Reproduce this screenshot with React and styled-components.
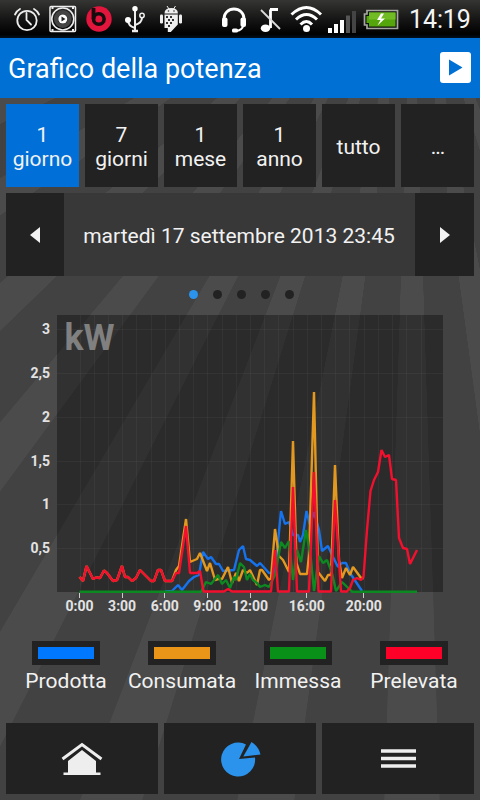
import React from "react";
import styled, { createGlobalStyle } from "styled-components";

const GlobalStyle = createGlobalStyle`
  * { box-sizing: border-box; }
  body { margin: 0; background: #424242; }
`;

const Screen = styled.div`
  width: 480px;
  height: 800px;
  overflow: hidden;
  display: flex;
  flex-direction: column;
  font-family: Roboto, "Liberation Sans", sans-serif;
  color: #f2f2f2;
  background: repeating-conic-gradient(
    from 82.7deg at 412px -68px,
    #4b4b4b 0deg 3.6deg,
    #424242 3.65deg 9.5deg,
    #4b4b4b 9.55deg
  );
`;

const StatusBar = styled.div`
  height: 38px;
  flex: none;
  background: linear-gradient(#353533, #161616 50%, #000 90%, #02101f);
  display: flex;
`;

const StatusIcons = styled.svg`
  display: block;
  width: 405px;
  height: 38px;
`;

const Clock = styled.span`
  font-size: 25px;
  line-height: 39px;
  letter-spacing: -0.1px;
  margin-left: 4px;
  color: #f4f4f4;
  white-space: nowrap;
`;

const Header = styled.header`
  height: 60px;
  flex: none;
  padding: 0 9px 0 8px;
  background: #0070d4;
  display: flex;
  align-items: center;
  justify-content: space-between;
`;

const Title = styled.h1`
  margin: 2px 0 0;
  font-size: 27px;
  font-weight: 400;
  letter-spacing: 0;
  color: #fff;
  white-space: nowrap;
`;

const PlayButton = styled.button`
  width: 31px;
  height: 31px;
  margin-bottom: 1px;
  padding: 0;
  border: 0;
  border-radius: 3px;
  background: #fff;
  svg { display: block; }
`;

const Tabs = styled.nav`
  display: grid;
  grid-template-columns: repeat(6, 1fr);
  gap: 6px;
  margin: 6px 6px 0;
  height: 83px;
  flex: none;
`;

const Tab = styled.button`
  border: 0;
  padding: 3px 0 0;
  min-width: 0;
  background: ${(p) => (p.$active ? "#0070d8" : "#222")};
  color: #f2f2f2;
  font: 400 21px/24px Roboto, sans-serif;
  letter-spacing: ${(p) => (p.$tight ? "-1px" : "0")};
  white-space: pre-line;
`;

const DateRow = styled.div`
  display: flex;
  margin: 6px 6px 0;
  height: 83px;
  flex: none;
`;

const Arrow = styled.button`
  width: ${(p) => p.$width}px;
  border: 0;
  padding: 0;
  background: #222;
  display: flex;
  align-items: center;
  justify-content: center;
`;

const DateLabel = styled.div`
  flex: 1;
  background: #383838;
  display: flex;
  align-items: center;
  justify-content: center;
  padding: 3px 1px 0 0;
  font-size: 21px;
  white-space: nowrap;
`;

const Dots = styled.div`
  display: flex;
  gap: 15px;
  margin: 14px 0 0 189px;
  height: 9px;
  flex: none;
`;

const Dot = styled.i`
  width: 9px;
  height: 9px;
  border-radius: 50%;
  background: ${(p) => (p.$active ? "#2b93ec" : "#222")};
`;

const ChartSvg = styled.svg`
  display: block;
  flex: none;
  width: 480px;
  height: 317px;
  margin-top: 1px;
  text {
    font-family: Roboto, sans-serif;
    font-weight: 700;
  }
`;

const Legend = styled.div`
  display: grid;
  grid-template-columns: repeat(4, 116px);
  margin: 24px 0 0 8px;
  height: 82px;
  flex: none;
`;

const LegendItem = styled.div`
  display: flex;
  flex-direction: column;
  align-items: center;
  font-size: 21px;
  line-height: 25px;
  letter-spacing: 0.05px;
  white-space: nowrap;
`;

const Swatch = styled.span`
  width: 68px;
  height: 24px;
  margin-bottom: 4px;
  border: 6px solid #222;
  background: ${(p) => p.$color};
`;

const BottomBar = styled.nav`
  display: grid;
  grid-template-columns: repeat(3, 1fr);
  gap: 6px;
  margin: 0 6px;
  height: 71px;
  flex: none;
`;

const NavButton = styled.button`
  border: 0;
  padding: 0;
  background: #222;
  display: flex;
  align-items: center;
  justify-content: center;
`;

const series = [
  {
    color: "#1673ee",
    points:
      "165,591.5 172,591 178,585 182,590 189,581 194,577 199,575 203,552 208,559 211,557 216,564 219,564 223,571 234,570 239,550 243,546 246,559 250,560 257,566 260,563 269,573 275,573 281,511 285,524 289,522 293,535 298,535 300,542 303,535 306.5,511 310,525 314,512 319,530 322,551 328,546 332,555 338,567 342,563 346,563 350,573 362,591",
  },
  {
    color: "#e3981f",
    points:
      "79.5,577 83,581 86.5,566 93,579 96,577.5 100,578 104,570.5 107,573 113,581 117,580 122,566 125,577 128,577 132,581 136,578 140,570 147,577 151,581 154,581 158,570 161,570 165,581 172,581 176,570 179,566 186,519 190,562 197,559 200,553 207,571 210,563 215,580 218,579 222,579 228,567 232,583 236,573 239,581 243,570 247,573 250,570 257,585 260,570 262,570 269,580 271,578 275,529 279,556 283,560 289,572 293,441 296.5,563 300,574 307,574 309,555 314,392 318,572 325,581 328,575 331,575 335,465 339,560 342,578 346,568 350,575 353,567 361,578 364,578",
  },
  {
    color: "#0d8922",
    points:
      "79.5,591.7 201,591.7 203,588 206,582 211,584 218,575 222,584 226,580 230,588 234,577 236,580 240,563 244,567 247,580 250,574 253,580 257,583 260,587 265,585 269,587 275,575 281,542 285,548 289,541 293,580 297,550 301,562 306,530 311,560 314,591 319,556 323,563 327,560 332,573 336,591 342,582 352,591.7 417,591.7",
  },
  {
    color: "#f3102e",
    points:
      "79.5,577 83,581 86.5,566 93,579 96,577.5 100,578 104,570.5 107,573 113,581 117,580 122,566 125,577 128,577 132,581 136,578 140,570 147,577 151,581 154,581 158,570 161,570 165,581 172,581 176,573 179,573 186,526 190,573 197,573 200,571 203.5,591.5 224,591.5 228,589 232,591.5 271,591.5 275,550 278,591.5 289,591.5 293,487 297,591.5 309,591.5 314,472 318.5,591.5 331,591.5 335,500 341,591.5 347,591.5 350,588 353,580 357,578 361,580 363.5,577 367,530 370.5,491 374,480 378,472 381.5,450 385,457 389,455 392,479 396,480 399,538 403,548 407,549 410,564 417,550",
  },
];

const hours = [0, 3, 6, 9, 12, 16, 20];
const hourX = (h) => 79.5 + h * 14.21;
const levels = ["0,5", "1", "1,5", "2", "2,5", "3"];
const levelY = (i) => 548 - i * 43.75;

function StatusBarIcons() {
  return (
    <StatusIcons viewBox="0 0 405 38" fill="none" stroke="#eee">
      <g strokeWidth="1.8" strokeLinecap="round">
        <circle cx="27" cy="20.500" r="9.700" />
        <path d="M26.500 13v7l4.500 4.500M15 14.500q2-4 5-5.500M39 14.500q-2-4-5-5.500" />
      </g>
      <g>
        <rect x="50" y="6.500" width="25.500" height="25" rx="1" strokeWidth="1.500" />
        <circle cx="62.800" cy="19" r="11" strokeWidth="1.600" />
        <circle cx="62.800" cy="19" r="6.900" stroke="#444" strokeWidth="4" />
        <circle cx="62.800" cy="19" r="4.500" fill="#fff" stroke="none" />
        <path d="M61.500 16.500v5l4-2.500z" fill="#222" stroke="none" />
        <path d="M51.500 8h2M72 8h2M51.500 30h2M72 30h2" strokeWidth="2" />
      </g>
      <circle cx="99" cy="19" r="12.700" fill="#e2153d" stroke="none" />
      <path d="M93.500 8v11" stroke="#160c0e" strokeWidth="3.800" />
      <circle cx="98.800" cy="19" r="5.300" stroke="#160c0e" strokeWidth="3.600" />
      <g strokeWidth="2">
        <path d="M135 9v21M135 28q-7-2-7-8M135 25q7-2 7-7.500" strokeWidth="2" />
        <path d="M132 31h6" strokeWidth="2.500" />
        <circle cx="135" cy="8.800" r="2.700" fill="#fff" stroke="none" />
        <circle cx="128" cy="20" r="3" fill="#fff" stroke="none" />
        <circle cx="142" cy="15.500" r="2.200" strokeWidth="1.500" />
      </g>
      <g fill="#eee" stroke="none">
        <path d="M164.500 13.500q0-5.500 6.700-5.500t6.700 5.500z" />
        <path d="M167 6l2 3M175.500 6l-2 3" stroke="#eee" />
        <rect x="160" y="14.500" width="3" height="9" rx="1.200" />
        <rect x="179" y="14.500" width="3" height="9" rx="1.200" />
        <path d="M164.500 14.500h13.300v10l-7 7.500h-3v-4h-3.300z" />
        <g fill="#333">
          <circle cx="168.500" cy="11" r=".8" />
          <circle cx="174" cy="11" r=".8" />
          <path d="M166 16h2v2h-2zM170 16h2v2h-2zM168 19h2v2h-2zM172 19h2v2h-2zM166 22h2v2h-2zM170 22h2v2h-2zM168 25h2v2h-2z" />
        </g>
      </g>
      <path d="M224 20v-1.500a10 9.500 0 0 1 20 0v1.500" strokeWidth="2.800" stroke="#fff" />
      <rect x="222" y="17.500" width="5.500" height="9.500" rx="2" fill="#fff" stroke="none" />
      <rect x="240.500" y="17.500" width="5.500" height="9.500" rx="2" fill="#fff" stroke="none" />
      <path d="M243.500 25q-1 5-7 6" stroke="#fff" strokeWidth="1.800" />
      <rect x="232" y="28.500" width="6" height="4" rx="1.500" fill="#fff" stroke="none" />
      <ellipse cx="265.500" cy="28.300" rx="4.700" ry="3.800" fill="#fff" stroke="none" />
      <path d="M270.500 28V9.500M270 9.500h8" stroke="#fff" strokeWidth="2.800" />
      <path d="M261 10l19 19" stroke="#ddd" strokeWidth="1.800" />
      <g stroke="#fff" strokeWidth="3">
        <path d="M291.500 14.500q15-14 29.500 0" />
        <path d="M296 19.500q10.500-10 21 0" />
        <path d="M300.500 24.500q6-6 11.500 0" />
      </g>
      <circle cx="306.500" cy="28.500" r="3.500" fill="#fff" stroke="none" />
      <g stroke="none" fill="#fff">
        <rect x="328" y="28" width="4" height="5" />
        <rect x="334" y="24" width="4" height="9" />
        <rect x="340" y="20" width="4" height="13" />
        <rect x="346" y="15.500" width="4" height="17.500" fill="#555" />
        <rect x="352" y="11" width="4" height="22" fill="#444" />
      </g>
      <path d="M367 10.500h30.500v18H367V25h-2.500v-11h2.500z" fill="#111" stroke="#a5a8a0" strokeWidth="1.700" />
      <path d="M369 12.500h26.500v14H369V23h-2.500v-7h2.500z" fill="#55a50c" stroke="none" />
      <path d="M369 12.500h26.500v7H369z" fill="#71bc24" stroke="none" />
      <path d="M381 13.500l-4 6.500h3.500l-3 5.500 7.500-7h-4l3-5z" fill="#fff" stroke="none" />
    </StatusIcons>
  );
}

function PowerChart() {
  return (
    <ChartSvg viewBox="0 300 480 317">
      <rect x="57" y="315" width="386" height="277" fill="#000" fillOpacity=".34" />
      <g stroke="#fff" strokeOpacity=".04">
        {Array.from({ length: 25 }, (_, i) => (
          <path key={i} d={`M${Math.round(hourX(i)) + 0.5} 315V592`} />
        ))}
        {levels.map((l, i) => (
          <path key={l} d={`M57 ${Math.round(levelY(i)) + 0.5}H443`} />
        ))}
      </g>
      <text x="64.500" y="349.500" fontSize="36" fill="#808080" textLength="50" lengthAdjust="spacingAndGlyphs">
        kW
      </text>
      {series.map((s) => (
        <polyline
          key={s.color}
          points={s.points}
          fill="none"
          stroke={s.color}
          strokeWidth="2.4"
          strokeLinejoin="bevel"
        />
      ))}
      <g fill="#e2e2e2" fontSize="14">
        {levels.map((l, i) => (
          <text key={l} x="50" y={levelY(i) + 5} textAnchor="end">
            {l}
          </text>
        ))}
        {hours.map((h) => (
          <text key={h} x={hourX(h)} y="611" textAnchor="middle">
            {h}:00
          </text>
        ))}
      </g>
      <g stroke="#ccc">
        {hours.map((h) => (
          <path key={h} d={`M${Math.floor(hourX(h)) + 0.5} 593V598`} />
        ))}
      </g>
    </ChartSvg>
  );
}

const periods = ["1\ngiorno", "7\ngiorni", "1\nmese", "1\nanno", "tutto", "..."];
const legend = [
  ["Prodotta", "#0078ff"],
  ["Consumata", "#ea9518"],
  ["Immessa", "#089019"],
  ["Prelevata", "#ff0029"],
];

export default function App() {
  return (
    <Screen>
      <GlobalStyle />
      <StatusBar>
        <StatusBarIcons />
        <Clock>14:19</Clock>
      </StatusBar>
      <Header>
        <Title>Grafico della potenza</Title>
        <PlayButton>
          <svg width="31" height="31">
            <path d="M9 7.500v16L22.500 15.500z" fill="#0070d4" />
          </svg>
        </PlayButton>
      </Header>
      <Tabs>
        {periods.map((p, i) => (
          <Tab key={p} $active={i === 0} $tight={p === "..."}>
            {p}
          </Tab>
        ))}
      </Tabs>
      <DateRow>
        <Arrow $width={58}>
          <svg width="10" height="16">
            <path d="M10 0v16L0 8z" fill="#f2f2f2" />
          </svg>
        </Arrow>
        <DateLabel>martedì 17 settembre 2013 23:45</DateLabel>
        <Arrow $width={59}>
          <svg width="10" height="16">
            <path d="M0 0v16l10-8z" fill="#f2f2f2" />
          </svg>
        </Arrow>
      </DateRow>
      <Dots>
        {[0, 1, 2, 3, 4].map((d) => (
          <Dot key={d} $active={d === 0} />
        ))}
      </Dots>
      <PowerChart />
      <Legend>
        {legend.map(([name, color]) => (
          <LegendItem key={name}>
            <Swatch $color={color} />
            {name}
          </LegendItem>
        ))}
      </Legend>
      <BottomBar>
        <NavButton>
          <svg width="42" height="36">
            <path d="M1.500 18L21 3.500l19.500 14.500" fill="none" stroke="#eee" strokeWidth="3" />
            <path d="M7 20L21 9l14 11v11.500h4.500v2.500H2.500v-2.500H7z" fill="#eee" />
          </svg>
        </NavButton>
        <NavButton>
          <svg width="42" height="38">
            <path d="M20 19L27 4.500A17 17 0 1 0 36 17.500z" fill="#2b93ec" />
            <path d="M24.300 16.500L32.500 2Q39.500 6.500 41.500 14.500z" fill="#2b93ec" />
          </svg>
        </NavButton>
        <NavButton>
          <svg width="35" height="22">
            <path d="M0 3h35M0 10.500h35M0 18h35" stroke="#eee" strokeWidth="3.500" />
          </svg>
        </NavButton>
      </BottomBar>
    </Screen>
  );
}
